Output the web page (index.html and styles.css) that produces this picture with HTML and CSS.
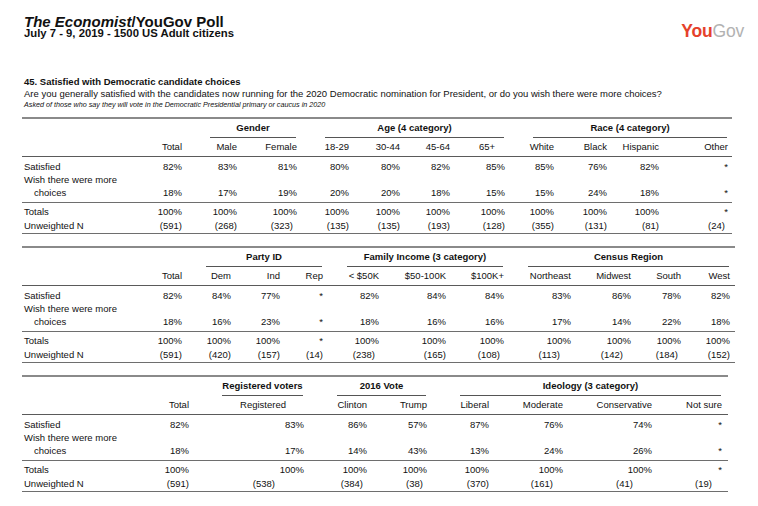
FILE: index.html
```html
<!DOCTYPE html>
<html>
<head>
<meta charset="utf-8">
<link rel="stylesheet" href="styles.css">
</head>
<body>
<div class="page">
  <header class="top">
    <div class="titles">
      <h1 class="title"><em>The Economist</em>/YouGov Poll</h1>
      <div class="subtitle">July 7 - 9, 2019 - 1500 US Adult citizens</div>
    </div>
    <div class="logo"><span class="you">You</span><span class="gov">Gov</span></div>
  </header>

  <section class="question">
    <h2 class="qh">45. Satisfied with Democratic candidate choices</h2>
    <p class="qt">Are you generally satisfied with the candidates now running for the 2020 Democratic nomination for President, or do you wish there were more choices?</p>
    <p class="qn">Asked of those who say they will vote in the Democratic Presidential primary or caucus in 2020</p>
  </section>

  <div class="tbl t1">
    <div class="row g">
      <div></div><div></div>
      <div class="grp s2">Gender</div>
      <div class="grp s4">Age (4 category)</div>
      <div class="grp s4">Race (4 category)</div>
      <div></div>
    </div>
    <div class="row h">
      <div></div><div>Total</div><div>Male</div><div>Female</div><div>18-29</div><div>30-44</div><div>45-64</div><div class="p10">65+</div><div>White</div><div>Black</div><div>Hispanic</div><div>Other</div><div></div>
    </div>
    <div class="row sat">
      <div class="lbl">Satisfied</div><div>82%</div><div>83%</div><div>81%</div><div>80%</div><div>80%</div><div>82%</div><div>85%</div><div>85%</div><div>76%</div><div>82%</div><div>*</div><div></div>
    </div>
    <div class="row wish">
      <div class="lbl ws">Wish there were more<br>choices</div><div>18%</div><div>17%</div><div>19%</div><div>20%</div><div>20%</div><div>18%</div><div>15%</div><div>15%</div><div>24%</div><div>18%</div><div>*</div><div></div>
    </div>
    <div class="row tot">
      <div class="lbl">Totals</div><div>100%</div><div>100%</div><div>100%</div><div>100%</div><div>100%</div><div>100%</div><div>100%</div><div>100%</div><div>100%</div><div>100%</div><div>*</div><div></div>
    </div>
    <div class="row n">
      <div class="lbl">Unweighted N</div><div>(591)</div><div>(268)</div><div class="p4">(323)</div><div>(135)</div><div>(135)</div><div>(193)</div><div>(128)</div><div>(355)</div><div>(131)</div><div>(81)</div><div class="p3">(24)</div><div></div>
    </div>
  </div>

  <div class="tbl t2">
    <div class="row g">
      <div></div><div></div>
      <div class="grp s3">Party ID</div>
      <div class="grp s3">Family Income (3 category)</div>
      <div class="grp s4">Census Region</div>
      <div></div>
    </div>
    <div class="row h">
      <div></div><div>Total</div><div>Dem</div><div>Ind</div><div>Rep</div><div>&lt; $50K</div><div>$50-100K</div><div>$100K+</div><div>Northeast</div><div>Midwest</div><div>South</div><div>West</div><div></div>
    </div>
    <div class="row sat">
      <div class="lbl">Satisfied</div><div>82%</div><div>84%</div><div>77%</div><div>*</div><div>82%</div><div>84%</div><div>84%</div><div>83%</div><div>86%</div><div>78%</div><div>82%</div><div></div>
    </div>
    <div class="row wish">
      <div class="lbl ws">Wish there were more<br>choices</div><div>18%</div><div>16%</div><div>23%</div><div>*</div><div>18%</div><div>16%</div><div>16%</div><div>17%</div><div>14%</div><div>22%</div><div>18%</div><div></div>
    </div>
    <div class="row tot">
      <div class="lbl">Totals</div><div>100%</div><div>100%</div><div>100%</div><div>*</div><div>100%</div><div>100%</div><div>100%</div><div>100%</div><div>100%</div><div>100%</div><div>100%</div><div></div>
    </div>
    <div class="row n">
      <div class="lbl">Unweighted N</div><div>(591)</div><div>(420)</div><div>(157)</div><div>(14)</div><div class="p4">(238)</div><div>(165)</div><div class="p4">(108)</div><div class="p11">(113)</div><div class="p8">(142)</div><div class="p3">(184)</div><div>(152)</div><div></div>
    </div>
  </div>

  <div class="tbl t3">
    <div class="row g">
      <div></div><div></div>
      <div class="grp s1">Registered voters</div>
      <div class="grp s2">2016 Vote</div>
      <div class="grp s4">Ideology (3 category)</div>
      <div></div>
    </div>
    <div class="row h">
      <div></div><div>Total</div><div class="hc">Registered</div><div>Clinton</div><div>Trump</div><div>Liberal</div><div>Moderate</div><div>Conservative</div><div>Not sure</div><div></div>
    </div>
    <div class="row sat">
      <div class="lbl">Satisfied</div><div>82%</div><div>83%</div><div>86%</div><div>57%</div><div>87%</div><div>76%</div><div>74%</div><div>*</div><div></div>
    </div>
    <div class="row wish">
      <div class="lbl ws">Wish there were more<br>choices</div><div>18%</div><div>17%</div><div>14%</div><div>43%</div><div>13%</div><div>24%</div><div>26%</div><div>*</div><div></div>
    </div>
    <div class="row tot">
      <div class="lbl">Totals</div><div>100%</div><div>100%</div><div>100%</div><div>100%</div><div>100%</div><div>100%</div><div>100%</div><div>*</div><div></div>
    </div>
    <div class="row n">
      <div class="lbl">Unweighted N</div><div>(591)</div><div class="p29">(538)</div><div class="p4">(384)</div><div class="p4">(38)</div><div>(370)</div><div class="p10">(161)</div><div class="p19">(41)</div><div class="p10">(19)</div><div></div>
    </div>
  </div>
</div>
</body>
</html>
```

FILE: styles.css
```css
* { box-sizing: border-box; }
html, body { margin: 0; padding: 0; background: #fff; }
body {
  font-family: "Liberation Sans", Arial, Helvetica, sans-serif;
  color: #111;
}
.page {
  padding: 15px 14px 0 22px;
}
.top {
  display: flex;
  justify-content: space-between;
  align-items: flex-end;
}
.titles { padding-left: 2px; }
.title {
  margin: 0;
  font-size: 15px;
  line-height: 13px;
  font-weight: bold;
}
.title em { font-style: italic; }
.subtitle {
  font-size: 11.3px;
  line-height: 11px;
  font-weight: bold;
}
.logo {
  font-size: 17.5px;
  line-height: 15px;
  letter-spacing: -0.2px;
}
.logo .you { color: #e5412b; font-weight: bold; }
.logo .gov { color: #b2b2b2; }

.question { padding-left: 2px; margin-top: 37px; }
.qh {
  margin: 0;
  font-size: 9.5px;
  line-height: 12px;
  font-weight: bold;
}
.qt {
  margin: 0;
  font-size: 9.5px;
  line-height: 12px;
  white-space: nowrap;
}
.qn {
  margin: 0;
  font-size: 7.2px;
  line-height: 10px;
  font-style: italic;
  white-space: nowrap;
}

.tbl {
  width: fit-content;
  border-top: 2px solid #8a8a8a;
  border-bottom: 1px solid #6e6e6e;
  margin-top: 7px;
  margin-bottom: 12px;
  font-size: 9.5px;
}
.tbl + .tbl { margin-top: 0; }
.t1 {
  --cols: 108px 52px 55px 60px 52px 51px 50px 55px 49px 53px 52px 69px 4px;
  --gml: 28px;
}
.t2 {
  --cols: 108px 52px 49px 49px 43px 56px 67px 58px 67px 60px 50px 49px 5px;
  --gml: 24px;
}
.t3 {
  --cols: 108px 59px 115px 63px 60px 62px 74px 89px 70px 6px;
  --gml: 33px;
}
.row {
  display: grid;
  grid-template-columns: var(--cols);
  line-height: 13px;
}
.row > div {
  text-align: right;
  white-space: nowrap;
}
.row > .lbl {
  text-align: left;
  padding-left: 2px;
}
.row > .ws {
  padding-left: 12px;
  text-indent: -10px;
}
.g { line-height: 12px; }
.row > .grp {
  text-align: center;
  font-weight: bold;
  padding: 3px 0;
  margin-left: var(--gml);
  margin-right: 1px;
  border-bottom: 1px solid #555;
}
.s1 { grid-column: span 1; }
.s2 { grid-column: span 2; }
.s3 { grid-column: span 3; }
.s4 { grid-column: span 4; }
.h {
  line-height: 12px;
  padding: 3px 0;
  border-bottom: 1px solid #5a5a5a;
}
.row > .hc {
  text-align: center;
  padding-left: var(--gml);
}
.sat { padding-top: 3px; }
.wish {
  align-items: end;
  padding-bottom: 3px;
  border-bottom: 1px solid #6e6e6e;
}
.tot { padding: 2px 0 1px; }
.n { padding-bottom: 1px; }
.row > .p3 { padding-right: 3px; }
.row > .p4 { padding-right: 4px; }
.row > .p8 { padding-right: 8px; }
.row > .p10 { padding-right: 10px; }
.row > .p11 { padding-right: 11px; }
.row > .p19 { padding-right: 19px; }
.row > .p29 { padding-right: 29px; }
```
